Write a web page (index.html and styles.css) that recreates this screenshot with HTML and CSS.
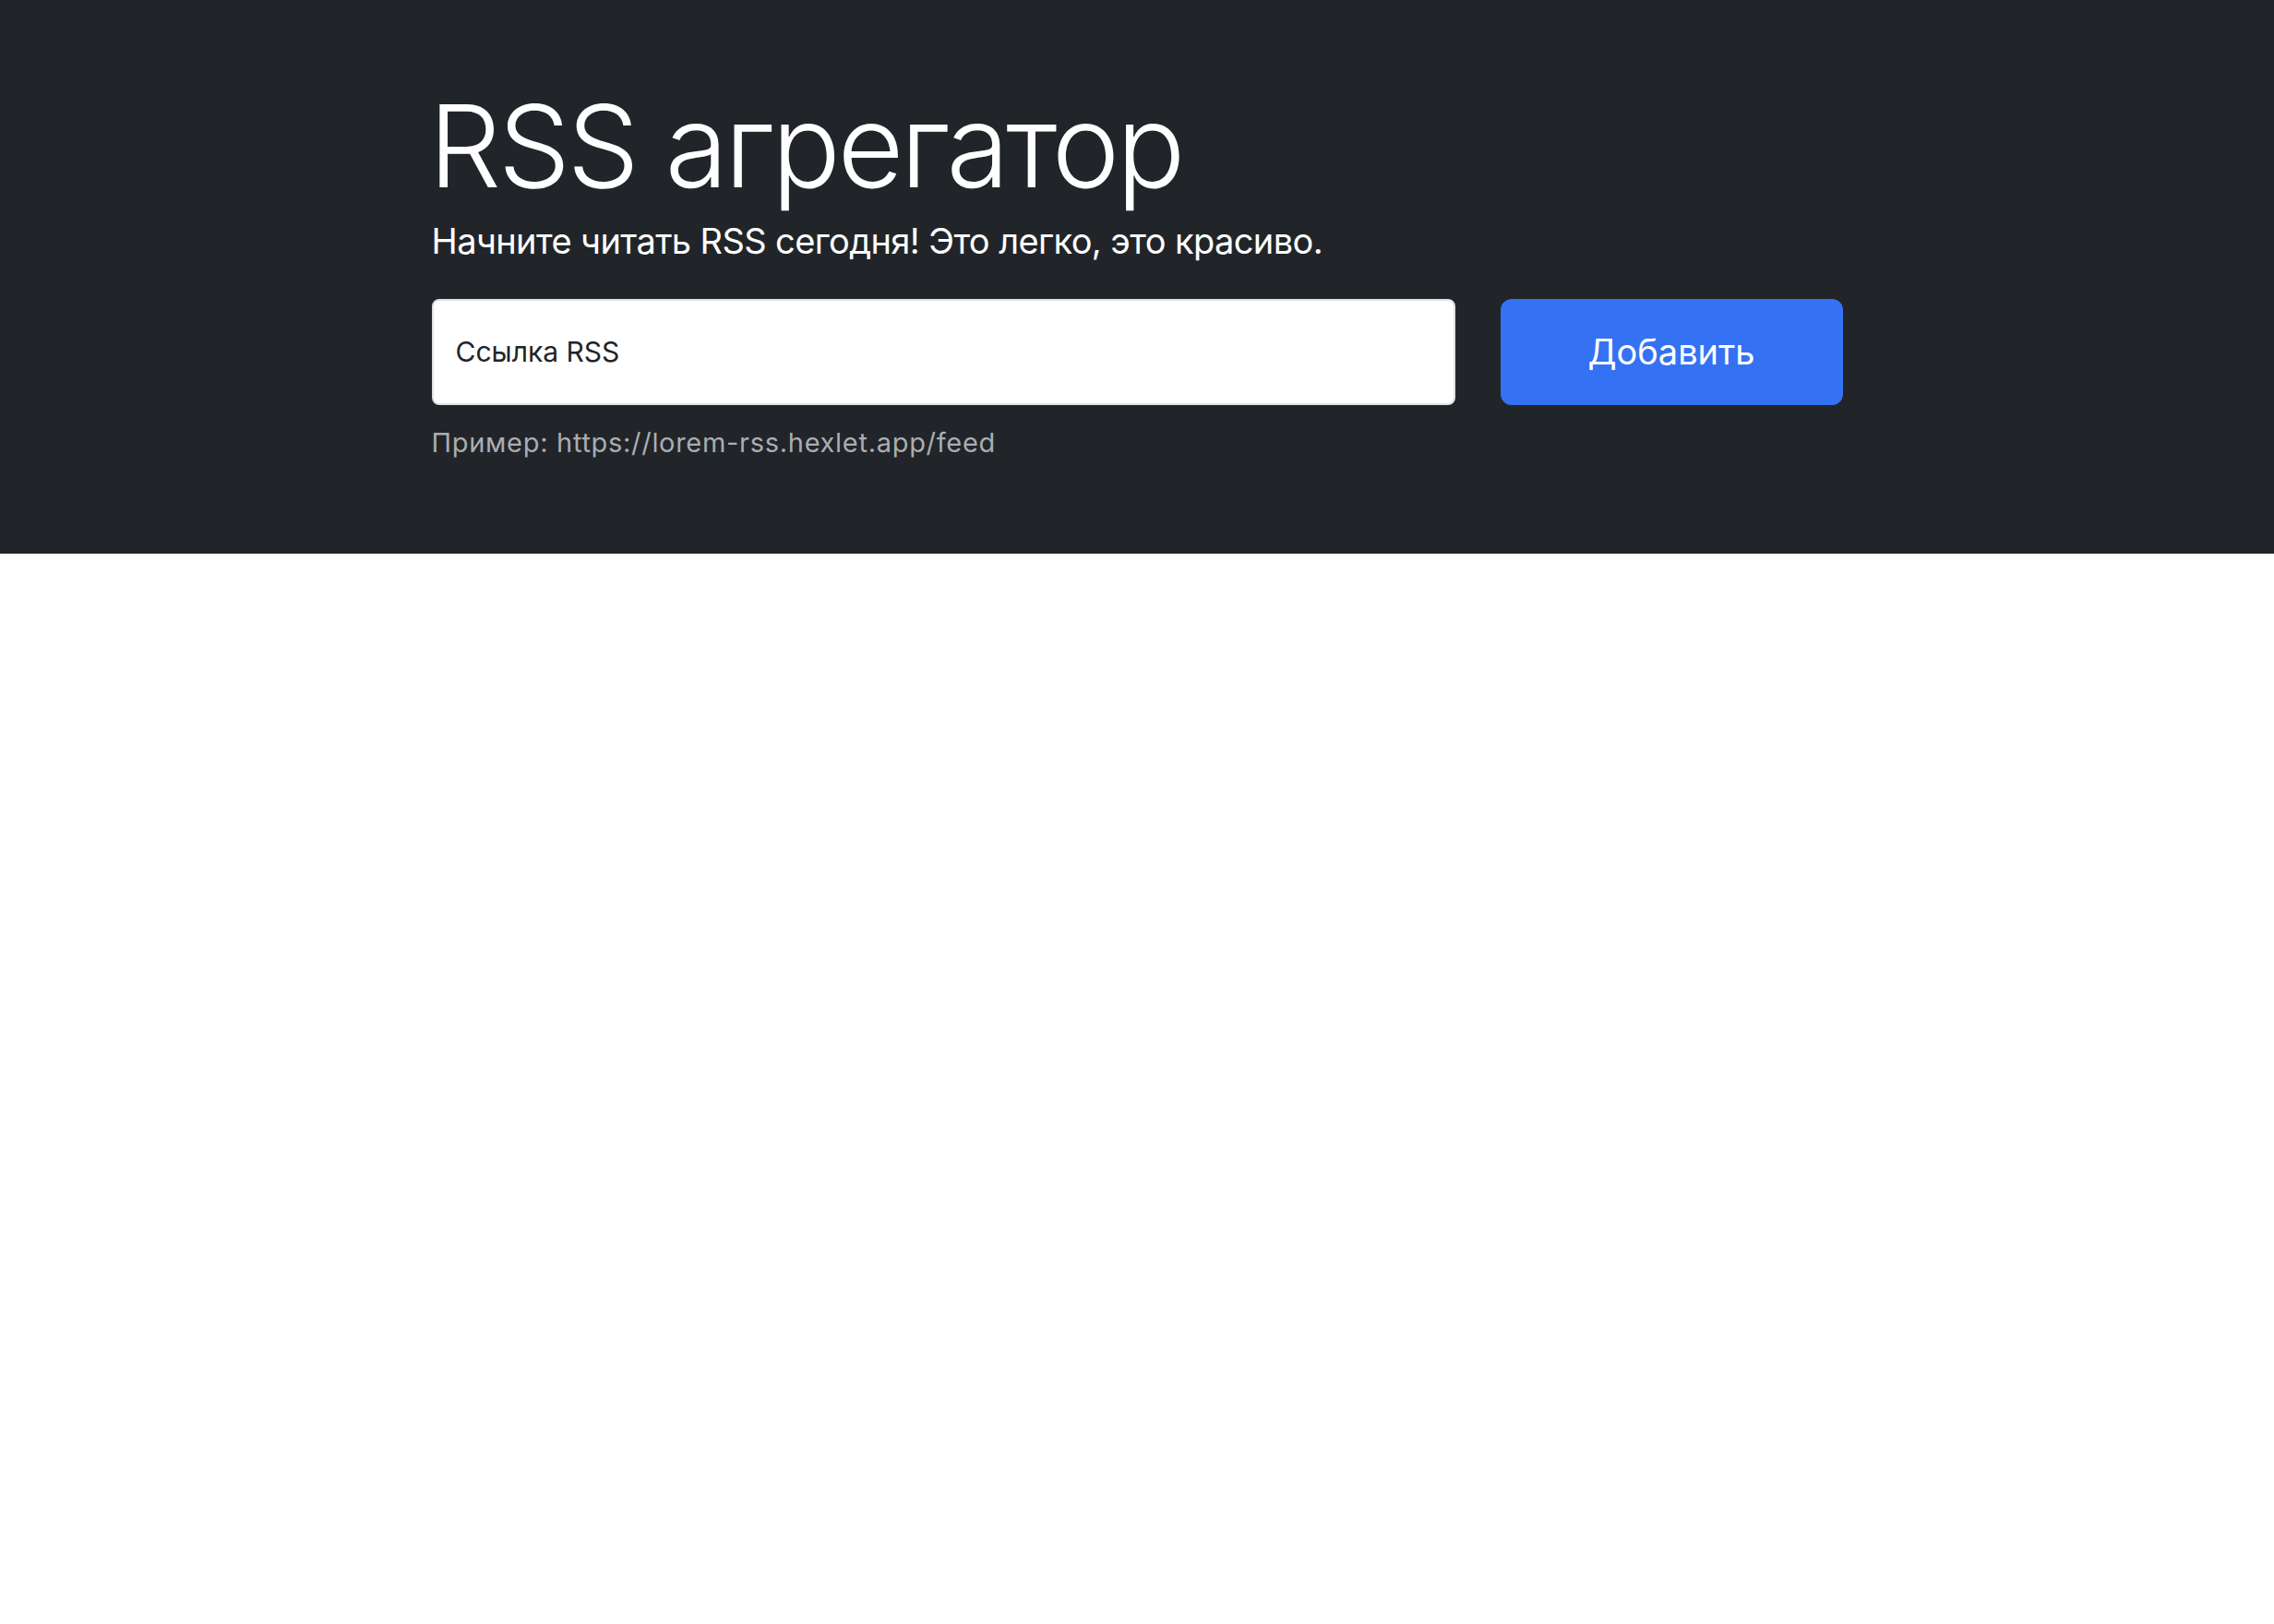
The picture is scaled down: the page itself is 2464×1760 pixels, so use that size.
FILE: index.html
```html
<!DOCTYPE html>
<html lang="ru">
<head>
<meta charset="utf-8">
<title>RSS агрегатор</title>
<link rel="stylesheet" href="styles.css">
</head>
<body>
<section class="hero">
  <div class="container">
    <h1 class="title">RSS агрегатор</h1>
    <p class="lead">Начните читать RSS сегодня! Это легко, это красиво.</p>
    <form class="rss-form">
      <input class="url-input" type="text" placeholder="Ссылка RSS" aria-label="url">
      <button class="add-btn" type="button">Добавить</button>
    </form>
    <p class="hint">Пример: https://lorem-rss.hexlet.app/feed</p>
  </div>
</section>
</body>
</html>
```
FILE: styles.css
```css
* { box-sizing: border-box; }
html, body { margin: 0; padding: 0; background: #fff; }
body { font-family: Inter, "Noto Sans", "Liberation Sans", sans-serif; }

.hero {
  background: #212529;
  color: #fff;
  padding: 84px 0 99px;
}
.container {
  width: 1529px;
  margin: 0 auto;
}
.title {
  margin: 0 0 0 -3px;
  font-size: 124px;
  font-weight: 300;
  line-height: 1.2;
  letter-spacing: -3.5px;
}
.lead {
  margin: 0;
  font-size: 38px;
  font-weight: 400;
  line-height: 1.5;
  letter-spacing: -0.6px;
}
.rss-form {
  display: flex;
  gap: 49px;
  margin-top: 34px;
}
.url-input {
  flex: 1;
  height: 115px;
  border: 2px solid #dee2e6;
  border-radius: 8px;
  background: #fff;
  padding: 0 24px;
  font-family: inherit;
  font-size: 30px;
  color: #212529;
  outline: none;
}
.url-input::placeholder { color: #212529; opacity: 1; }
.add-btn {
  width: 371px;
  height: 115px;
  border: 0;
  border-radius: 12px;
  background: #3572f3;
  color: #fff;
  font-family: inherit;
  font-size: 38px;
  font-weight: 400;
  cursor: pointer;
}
.hint {
  margin: 19px 0 0;
  font-size: 29px;
  line-height: 1.5;
  letter-spacing: 0.7px;
  color: #a9adb2;
}
```
